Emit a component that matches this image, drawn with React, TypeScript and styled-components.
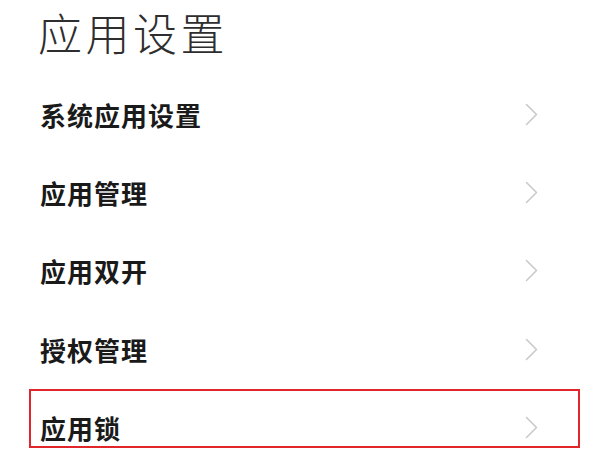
import React from "react";
import styled, { createGlobalStyle } from "styled-components";

const Global = createGlobalStyle`
  html, body { margin: 0; padding: 0; background: #ffffff; }
  body { font-family: "Noto Sans CJK SC", "Noto Sans", sans-serif; }
`;

const Page = styled.div`
  width: 600px;
  height: 450px;
  overflow: hidden;
  background: #ffffff;
  display: flex;
  flex-direction: column;
`;

const Title = styled.h1`
  flex: none;
  margin: 0;
  height: 76px;
  padding: 0 0 0 38px;
  box-sizing: border-box;
  font-size: 44px;
  line-height: 64px;
  font-weight: 300;
  color: #2e2e2e;
  letter-spacing: 3.5px;
`;

const List = styled.div`
  flex: none;
  display: flex;
  flex-direction: column;
`;

const Row = styled.div`
  position: relative;
  height: 78.3px;
  flex: none;
  display: flex;
  align-items: center;
  justify-content: space-between;
  padding: 0 62px 2px 40px;
  box-sizing: border-box;
`;

const Label = styled.span`
  font-size: 26px;
  font-weight: 700;
  color: #1a1a1a;
  letter-spacing: 1px;
`;

const Highlight = styled.div`
  position: absolute;
  left: 29px;
  right: 20px;
  top: 0;
  height: 59px;
  border: 2px solid #e0262b;
  box-sizing: border-box;
  pointer-events: none;
`;

const Chevron = () => (
  <svg width="13" height="23" viewBox="0 0 13 23" fill="none">
    <polyline
      points="1.5,1.5 11.5,11.5 1.5,21.5"
      stroke="#c8c8c8"
      strokeWidth="1.5"
      strokeLinecap="round"
      strokeLinejoin="round"
    />
  </svg>
);

const items = ["系统应用设置", "应用管理", "应用双开", "授权管理", "应用锁"];

export default function App() {
  return (
    <>
      <Global />
      <Page>
        <Title>应用设置</Title>
        <List>
          {items.map((t, i) => (
            <Row key={t}>
              <Label>{t}</Label>
              <Chevron />
              {i === items.length - 1 && <Highlight />}
            </Row>
          ))}
        </List>
      </Page>
    </>
  );
}
